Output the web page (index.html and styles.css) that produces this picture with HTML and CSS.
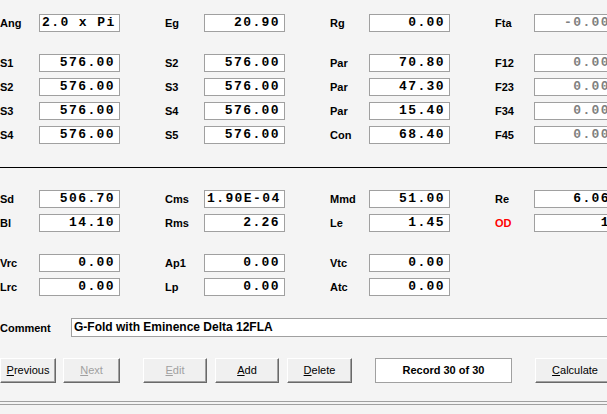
FILE: index.html
```html
<!DOCTYPE html>
<html>
<head>
<meta charset="utf-8">
<link rel="stylesheet" href="styles.css">
</head>
<body>
<div class="form">
  <div class="row">
    <div class="field"><span class="lbl">Ang</span><span class="box left">2.0 x Pi</span></div>
    <div class="field"><span class="lbl">Eg</span><span class="box">20.90</span></div>
    <div class="field"><span class="lbl">Rg</span><span class="box">0.00</span></div>
    <div class="field"><span class="lbl">Fta</span><span class="box dis">-0.00</span></div>
  </div>
  <div class="row spaced">
    <div class="field"><span class="lbl">S1</span><span class="box">576.00</span></div>
    <div class="field"><span class="lbl">S2</span><span class="box">576.00</span></div>
    <div class="field"><span class="lbl">Par</span><span class="box">70.80</span></div>
    <div class="field"><span class="lbl">F12</span><span class="box dis">0.00</span></div>
  </div>
  <div class="row">
    <div class="field"><span class="lbl">S2</span><span class="box">576.00</span></div>
    <div class="field"><span class="lbl">S3</span><span class="box">576.00</span></div>
    <div class="field"><span class="lbl">Par</span><span class="box">47.30</span></div>
    <div class="field"><span class="lbl">F23</span><span class="box dis">0.00</span></div>
  </div>
  <div class="row">
    <div class="field"><span class="lbl">S3</span><span class="box">576.00</span></div>
    <div class="field"><span class="lbl">S4</span><span class="box">576.00</span></div>
    <div class="field"><span class="lbl">Par</span><span class="box">15.40</span></div>
    <div class="field"><span class="lbl">F34</span><span class="box dis">0.00</span></div>
  </div>
  <div class="row">
    <div class="field"><span class="lbl">S4</span><span class="box">576.00</span></div>
    <div class="field"><span class="lbl">S5</span><span class="box">576.00</span></div>
    <div class="field"><span class="lbl">Con</span><span class="box">68.40</span></div>
    <div class="field"><span class="lbl">F45</span><span class="box dis">0.00</span></div>
  </div>

  <div class="divider"></div>

  <div class="row after-divider">
    <div class="field"><span class="lbl">Sd</span><span class="box">506.70</span></div>
    <div class="field"><span class="lbl">Cms</span><span class="box left">1.90E-04</span></div>
    <div class="field"><span class="lbl">Mmd</span><span class="box">51.00</span></div>
    <div class="field"><span class="lbl">Re</span><span class="box">6.06</span></div>
  </div>
  <div class="row">
    <div class="field"><span class="lbl">Bl</span><span class="box">14.10</span></div>
    <div class="field"><span class="lbl">Rms</span><span class="box">2.26</span></div>
    <div class="field"><span class="lbl">Le</span><span class="box">1.45</span></div>
    <div class="field"><span class="lbl red">OD</span><span class="box">1</span></div>
  </div>
  <div class="row spaced">
    <div class="field"><span class="lbl">Vrc</span><span class="box">0.00</span></div>
    <div class="field"><span class="lbl">Ap1</span><span class="box">0.00</span></div>
    <div class="field"><span class="lbl">Vtc</span><span class="box">0.00</span></div>
  </div>
  <div class="row">
    <div class="field"><span class="lbl">Lrc</span><span class="box">0.00</span></div>
    <div class="field"><span class="lbl">Lp</span><span class="box">0.00</span></div>
    <div class="field"><span class="lbl">Atc</span><span class="box">0.00</span></div>
  </div>

  <div class="comment-row">
    <span class="comment-lbl">Comment</span>
    <span class="comment-box">G-Fold with Eminence Delta 12FLA</span>
  </div>

  <div class="buttons">
    <span class="btn w-prev"><u>P</u>revious</span>
    <span class="btn w-next disabled"><u>N</u>ext</span>
    <span class="btn w-edit gap-big disabled"><u>E</u>dit</span>
    <span class="btn w-add"><u>A</u>dd</span>
    <span class="btn w-del"><u>D</u>elete</span>
    <span class="record gap-big">Record 30 of 30</span>
    <span class="btn w-calc gap-big"><u>C</u>alculate</span>
  </div>

  <div class="bottom-rule"></div>
</div>
</body>
</html>
```

FILE: styles.css
```css
html, body {
  margin: 0;
  padding: 0;
  background: #f4f4f4;
  overflow: hidden;
}

.form {
  width: 700px;
  padding-top: 14px;
  font-family: "Liberation Sans", Arial, sans-serif;
  color: #000;
}

.row {
  display: flex;
  height: 18px;
  margin-top: 6px;
}

.row:first-child {
  margin-top: 0;
}

.row.spaced {
  margin-top: 22px;
}

.field {
  display: flex;
  align-items: center;
  width: 165px;
  flex: none;
}

.lbl {
  width: 39px;
  flex: none;
  font-size: 11px;
  font-weight: bold;
  line-height: 18px;
}

.lbl.red {
  color: #ff0000;
}

.box {
  box-sizing: border-box;
  width: 81px;
  height: 18px;
  border: 1px solid #a0a0a0;
  background: #fff;
  font-family: "Liberation Mono", "Courier New", monospace;
  font-weight: bold;
  font-size: 13px;
  letter-spacing: 1.4px;
  line-height: 16px;
  text-align: right;
  padding-right: 4px;
  white-space: nowrap;
  overflow: hidden;
}

.box.left {
  text-align: left;
  padding-left: 2px;
  padding-right: 0;
}

.box.dis {
  color: #808080;
}

.divider {
  height: 1px;
  background: #000;
  margin-top: 23px;
  width: 607px;
}

.row.after-divider {
  margin-top: 22px;
}

.comment-row {
  display: flex;
  align-items: center;
  margin-top: 22px;
  height: 19px;
}

.comment-lbl {
  width: 71px;
  flex: none;
  font-size: 11px;
  font-weight: bold;
}

.comment-box {
  box-sizing: border-box;
  width: 560px;
  height: 19px;
  border: 1px solid #a0a0a0;
  background: #fff;
  font-size: 12px;
  font-weight: bold;
  line-height: 17px;
  padding-left: 2px;
}

.buttons {
  display: flex;
  margin-top: 21px;
  height: 25px;
}

.btn {
  box-sizing: border-box;
  height: 25px;
  border-top: 1px solid #fff;
  border-left: 1px solid #fff;
  border-right: 1px solid #696969;
  border-bottom: 1px solid #696969;
  box-shadow: inset -1px -1px 0 #a0a0a0;
  background: #f0f0f0;
  font-size: 11px;
  line-height: 23px;
  text-align: center;
  flex: none;
  margin-left: 7px;
}

.btn.disabled {
  color: #a0a0a0;
}

.w-prev { width: 56px; margin-left: 0; }
.w-next { width: 57px; }
.w-edit { width: 64px; }
.w-add { width: 64px; margin-left: 8px; }
.w-del { width: 65px; margin-left: 8px; }
.w-calc { width: 80px; }

.gap-big {
  margin-left: 23px;
}

.record {
  box-sizing: border-box;
  width: 137px;
  height: 25px;
  flex: none;
  border: 1px solid #a0a0a0;
  background: #fff;
  font-size: 11px;
  font-weight: bold;
  line-height: 23px;
  text-align: center;
}

.bottom-rule {
  margin-top: 18px;
  height: 2px;
  border-top: 1px solid #a0a0a0;
  border-bottom: 1px solid #a0a0a0;
  width: 607px;
}
```
